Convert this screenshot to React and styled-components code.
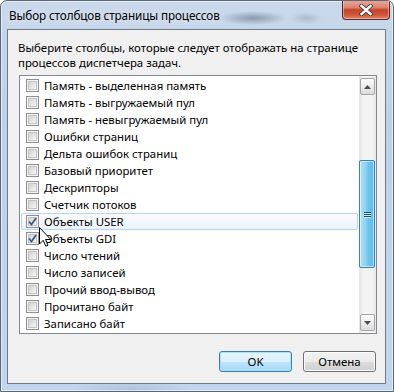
import React from "react";
import styled, { createGlobalStyle } from "styled-components";

const GlobalStyle = createGlobalStyle`
  html, body { margin: 0; padding: 0; background: #ffffff; }
  body { font-family: "Noto Sans", "Liberation Sans", sans-serif; font-size: 11.4px; color: #000; }
  * { box-sizing: border-box; }
`;

const Window = styled.div`
  position: relative;
  width: 394px;
  height: 392px;
  border: 1px solid #58677a;
  border-radius: 7px 7px 0 0;
  background:
    radial-gradient(ellipse 34px 7px at 252px 17px, rgba(90,105,125,0.55), rgba(90,105,125,0) 100%),
    radial-gradient(ellipse 16px 6px at 305px 17px, rgba(120,135,155,0.35), rgba(120,135,155,0) 100%),
    radial-gradient(ellipse 60px 12px at 130px 390px, rgba(150,170,195,0.45), rgba(150,170,195,0) 100%),
    linear-gradient(180deg, #c9d8ea 0%, #bfd1e8 30%, #c3d5ec 100%);
  box-shadow: inset 0 0 0 1px rgba(255,255,255,0.55);
  display: flex;
  flex-direction: column;
  overflow: hidden;
`;

const TitleBar = styled.div`
  height: 28px;
  display: flex;
  align-items: center;
  padding: 0 0 1px 8px;
  font-size: 11.7px;
  letter-spacing: -0.1px;
  color: #000;
  text-shadow: 0 0 8px rgba(255,255,255,0.9);
`;

const CloseButton = styled.div`
  position: absolute;
  top: -1px;
  right: 3px;
  width: 48px;
  height: 20px;
  border: 1px solid #5a2a22;
  border-top: none;
  border-radius: 0 0 4px 4px;
  background: linear-gradient(180deg, #e9a99b 0%, #dc826d 40%, #c5432a 52%, #d0583c 80%, #e08a6a 100%);
  box-shadow: inset 0 0 0 1px rgba(255,210,200,0.5);
  display: flex;
  align-items: center;
  justify-content: center;
`;

const Client = styled.div`
  flex: 1;
  margin: 0 7px 7px 6px;
  border: 1px solid #6d7c8d;
  background: #f0f0f0;
  display: flex;
  flex-direction: column;
  padding: 10px 0 0 10px;
`;

const Intro = styled.div`
  line-height: 15px;
  color: #000;
`;

const ListBox = styled.div`
  margin: 5px 8px 0 1px;
  height: 259px;
  border: 1px solid #828790;
  background: #fff;
  display: flex;
`;

const Items = styled.div`
  flex: 1;
  padding-top: 1px;
  display: flex;
  flex-direction: column;
`;

const Row = styled.div`
  height: 17px;
  margin: 0 1px;
  display: flex;
  align-items: center;
  padding-left: 4px;
  border: 1px solid ${(p) => (p.$hot ? "#b8d6fb" : "transparent")};
  border-radius: 2px;
  background: ${(p) => (p.$hot ? "linear-gradient(180deg, #fafbfd, #ebf3fd)" : "transparent")};
  white-space: nowrap;
`;

const Box = styled.span`
  width: 13px;
  height: 13px;
  flex: none;
  border: 1px solid #8f8f8f;
  background: #f4f4f4;
  display: flex;
  align-items: center;
  justify-content: center;
  margin-right: 5px;
  position: relative;
  &::before {
    content: "";
    position: absolute;
    inset: 1px;
    border: 1px solid #c4c4c4;
    background: linear-gradient(135deg, #d2d2d2 0%, #e6e6e6 55%, #f8f8f8 100%);
  }
`;

const Check = styled.svg`
  position: relative;
  z-index: 1;
`;

const Label = styled.span`
  color: #000;
`;

const ScrollBar = styled.div`
  width: 17px;
  display: flex;
  flex-direction: column;
  background: linear-gradient(90deg, #e3e3e3 0%, #f3f3f3 25%, #f3f3f3 75%, #e6e6e6 100%);
  padding: 1px 0;
`;

const ArrowBtn = styled.div`
  height: 17px;
  margin: 1px 1px;
  border: 1px solid #a5a5a5;
  border-radius: 2px;
  background: linear-gradient(180deg, #fbfbfb 0%, #ececec 50%, #dcdcdc 100%);
  display: flex;
  align-items: center;
  justify-content: center;
`;

const Track = styled.div`
  flex: 1;
  display: flex;
  flex-direction: column;
  padding-top: ${(p) => p.$top}px;
`;

const Thumb = styled.div`
  height: ${(p) => p.$h}px;
  margin: 0 1px 0 0;
  border: 1px solid #3c7fb1;
  border-radius: 2px;
  background: linear-gradient(90deg, #b0e0f8 0%, #8fd2f3 40%, #6cc3ee 60%, #5fbcec 100%);
  box-shadow: inset 0 0 0 1px rgba(255,255,255,0.55);
  display: flex;
  align-items: center;
  justify-content: center;
`;

const Grip = styled.div`
  width: 7px;
  display: flex;
  flex-direction: column;
  gap: 1px;
  span { height: 1px; background: #1c4a6c; box-shadow: 0 1px 0 #c9ecfb; }
`;

const Footer = styled.div`
  display: flex;
  justify-content: flex-end;
  gap: 11px;
  padding: 17px 9px 0 0;
`;

const Button = styled.button`
  width: 73px;
  height: 21px;
  font-family: inherit;
  font-size: 11.4px;
  color: #000;
  padding: 0;
  border: 1px solid ${(p) => (p.$default ? "#3c7fb1" : "#707070")};
  border-radius: 3px;
  background: ${(p) =>
    p.$default
      ? "linear-gradient(180deg, #eaf6fd 0%, #d9f0fc 50%, #bee6fd 51%, #a7d9f5 100%)"
      : "linear-gradient(180deg, #f2f2f2 0%, #ebebeb 50%, #dddddd 51%, #cfcfcf 100%)"};
  box-shadow: inset 0 0 0 1px ${(p) => (p.$default ? "#a6e3fb" : "#fcfcfc")};
`;

const Cursor = styled.svg`
  position: absolute;
  left: 38px;
  top: 226px;
`;

const items = [
  "Память - выделенная память",
  "Память - выгружаемый пул",
  "Память - невыгружаемый пул",
  "Ошибки страниц",
  "Дельта ошибок страниц",
  "Базовый приоритет",
  "Дескрипторы",
  "Счетчик потоков",
  "Объекты USER",
  "Объекты GDI",
  "Число чтений",
  "Число записей",
  "Прочий ввод-вывод",
  "Прочитано байт",
  "Записано байт",
];

const checked = new Set(["Объекты USER", "Объекты GDI"]);

export default function App() {
  return (
    <>
      <GlobalStyle />
      <Window>
        <TitleBar>Выбор столбцов страницы процессов</TitleBar>
        <CloseButton>
          <svg width="14" height="12" viewBox="0 0 14 12">
            <path d="M2.5 2 L11.5 10 M11.5 2 L2.5 10" stroke="#3b3b3b" strokeWidth="4.2" strokeLinecap="square" />
            <path d="M2.5 2 L11.5 10 M11.5 2 L2.5 10" stroke="#ffffff" strokeWidth="2.4" strokeLinecap="square" />
          </svg>
        </CloseButton>
        <Client>
          <Intro>
            Выберите столбцы, которые следует отображать на странице
            <br />
            процессов диспетчера задач.
          </Intro>
          <ListBox>
            <Items>
              {items.map((t) => (
                <Row key={t} $hot={t === "Объекты USER"}>
                  <Box>
                    {checked.has(t) && (
                      <Check width="9" height="9" viewBox="0 0 9 9">
                        <path d="M1 4.5 L3.5 7.5 L8 1" fill="none" stroke="#3c5a8a" strokeWidth="1.8" />
                      </Check>
                    )}
                  </Box>
                  <Label>{t}</Label>
                </Row>
              ))}
            </Items>
            <ScrollBar>
              <ArrowBtn>
                <svg width="7" height="4" viewBox="0 0 7 4"><path d="M0 4 L3.5 0 L7 4 Z" fill="#4d4d4d" /></svg>
              </ArrowBtn>
              <Track $top={64}>
                <Thumb $h={108}>
                  <Grip><span /><span /><span /></Grip>
                </Thumb>
              </Track>
              <ArrowBtn>
                <svg width="7" height="4" viewBox="0 0 7 4"><path d="M0 0 L3.5 4 L7 0 Z" fill="#4d4d4d" /></svg>
              </ArrowBtn>
            </ScrollBar>
          </ListBox>
          <Footer>
            <Button $default>OK</Button>
            <Button>Отмена</Button>
          </Footer>
        </Client>
        <Cursor width="13" height="20" viewBox="0 0 13 20">
          <path d="M0.5 0.5 L0.5 17 L4.2 13.3 L6.8 19.2 L9 18.2 L6.5 12.5 L11.8 12.5 Z" fill="#fff" stroke="#000" strokeWidth="1" strokeLinejoin="miter" />
        </Cursor>
      </Window>
    </>
  );
}
